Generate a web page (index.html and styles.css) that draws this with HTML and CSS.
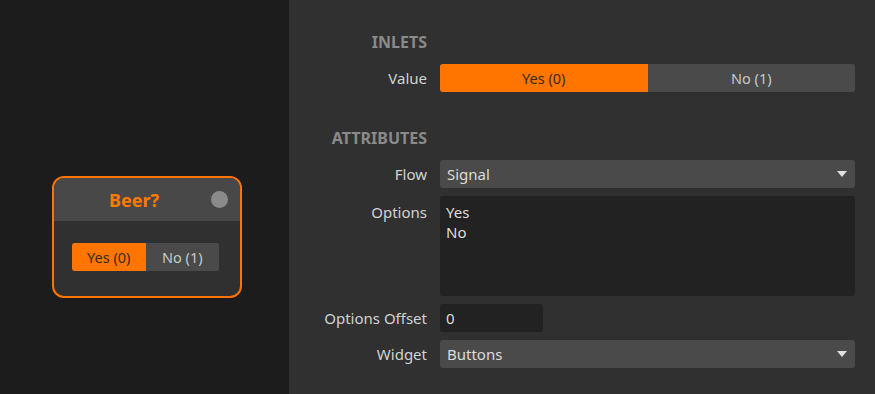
FILE: index.html
```html
<!DOCTYPE html>
<html lang="en">
<head>
    <meta charset="UTF-8">
    <title>Node Inspector</title>
    <link rel="stylesheet" href="styles.css">
</head>
<body>

<!-- Patch canvas -->
<div class="canvas">
    <div class="node">
        <div class="node-header">
            <span class="node-title">Beer?</span>
            <span class="node-dot"></span>
        </div>
        <div class="node-body">
            <div class="segmented small">
                <button class="seg active">Yes (0)</button>
                <button class="seg">No (1)</button>
            </div>
        </div>
    </div>
</div>

<!-- Inspector -->
<div class="inspector">
    <div class="form">
        <div class="section">INLETS</div>
        <div></div>

        <label>Value</label>
        <div class="segmented">
            <button class="seg active">Yes (0)</button>
            <button class="seg">No (1)</button>
        </div>

        <div class="section spaced">ATTRIBUTES</div>
        <div class="spaced"></div>

        <label>Flow</label>
        <div class="select">Signal<span class="arrow"></span></div>

        <label class="top">Options</label>
        <div class="textarea">Yes<br>No</div>

        <label>Options Offset</label>
        <div class="input short">0</div>

        <label>Widget</label>
        <div class="select">Buttons<span class="arrow"></span></div>
    </div>
</div>

</body>
</html>
```

FILE: styles.css
```css
body {
    margin: 0;
    height: 394px;
    display: flex;
    font-family: 'Noto Sans', 'Open Sans', sans-serif;
    font-size: 15px;
    color: #d2d2d2;
    background-color: #303030;
    overflow: hidden;
}

.canvas {
    width: 237px;
    flex-shrink: 0;
    background-color: #1c1c1c;
    padding: 176px 0 0 52px;
}

.node {
    position: relative;
    width: 186px;
    height: 118px;
    border: 2px solid #ff7300;
    border-radius: 12px;
    background-color: #303030;
    overflow: hidden;
}

.node-header {
    height: 43px;
    padding-right: 26px;
    background-color: #484848;
    display: flex;
    align-items: center;
    justify-content: center;
}

.node-title {
    color: #ff7a00;
    font-weight: 700;
    font-size: 18px;
}

.node-dot {
    position: absolute;
    top: 13px;
    right: 12px;
    width: 17px;
    height: 17px;
    border-radius: 50%;
    background-color: #8a8a8a;
}

.node-body {
    display: flex;
    padding: 22px 0 0 18px;
}

.segmented {
    display: flex;
    height: 28px;
    border-radius: 3px;
    overflow: hidden;
    background-color: #4a4a4a;
}

.segmented .seg {
    flex: 1;
    border: none;
    margin: 0;
    padding: 0;
    font-family: inherit;
    font-size: 14.5px;
    color: #c8c8c8;
    background-color: #4a4a4a;
}

.segmented .seg.active {
    background-color: #ff7500;
    color: #3a2a1e;
}

.segmented.small {
    width: 147px;
}

.inspector {
    flex: 1;
    background-color: #303030;
    padding-top: 32px;
}

.form {
    display: grid;
    grid-template-columns: 138px 415px;
    column-gap: 13px;
    row-gap: 8px;
    align-items: center;
}

.form label {
    text-align: right;
    line-height: 28px;
}

.form label.top {
    align-self: start;
    line-height: 32px;
}

.section {
    text-align: right;
    font-weight: 700;
    font-size: 16px;
    color: #8a8a8a;
    line-height: 20px;
    margin-bottom: 4px;
}

.section.spaced,
div.spaced {
    margin-top: 28px;
    margin-bottom: 4px;
}

.select {
    position: relative;
    height: 28px;
    line-height: 28px;
    padding-left: 7px;
    border-radius: 3px;
    background-color: #4a4a4a;
    color: #dcdcdc;
}

.arrow {
    position: absolute;
    right: 8px;
    top: 11px;
    width: 0;
    height: 0;
    border-left: 5px solid transparent;
    border-right: 5px solid transparent;
    border-top: 6px solid #e0e0e0;
}

.textarea {
    height: 88px;
    padding: 6px;
    line-height: 20px;
    border-radius: 3px;
    background-color: #222;
    color: #dcdcdc;
}

.input {
    height: 28px;
    line-height: 28px;
    padding-left: 6px;
    border-radius: 3px;
    background-color: #222;
    color: #dcdcdc;
}

.input.short {
    width: 97px;
}
```
